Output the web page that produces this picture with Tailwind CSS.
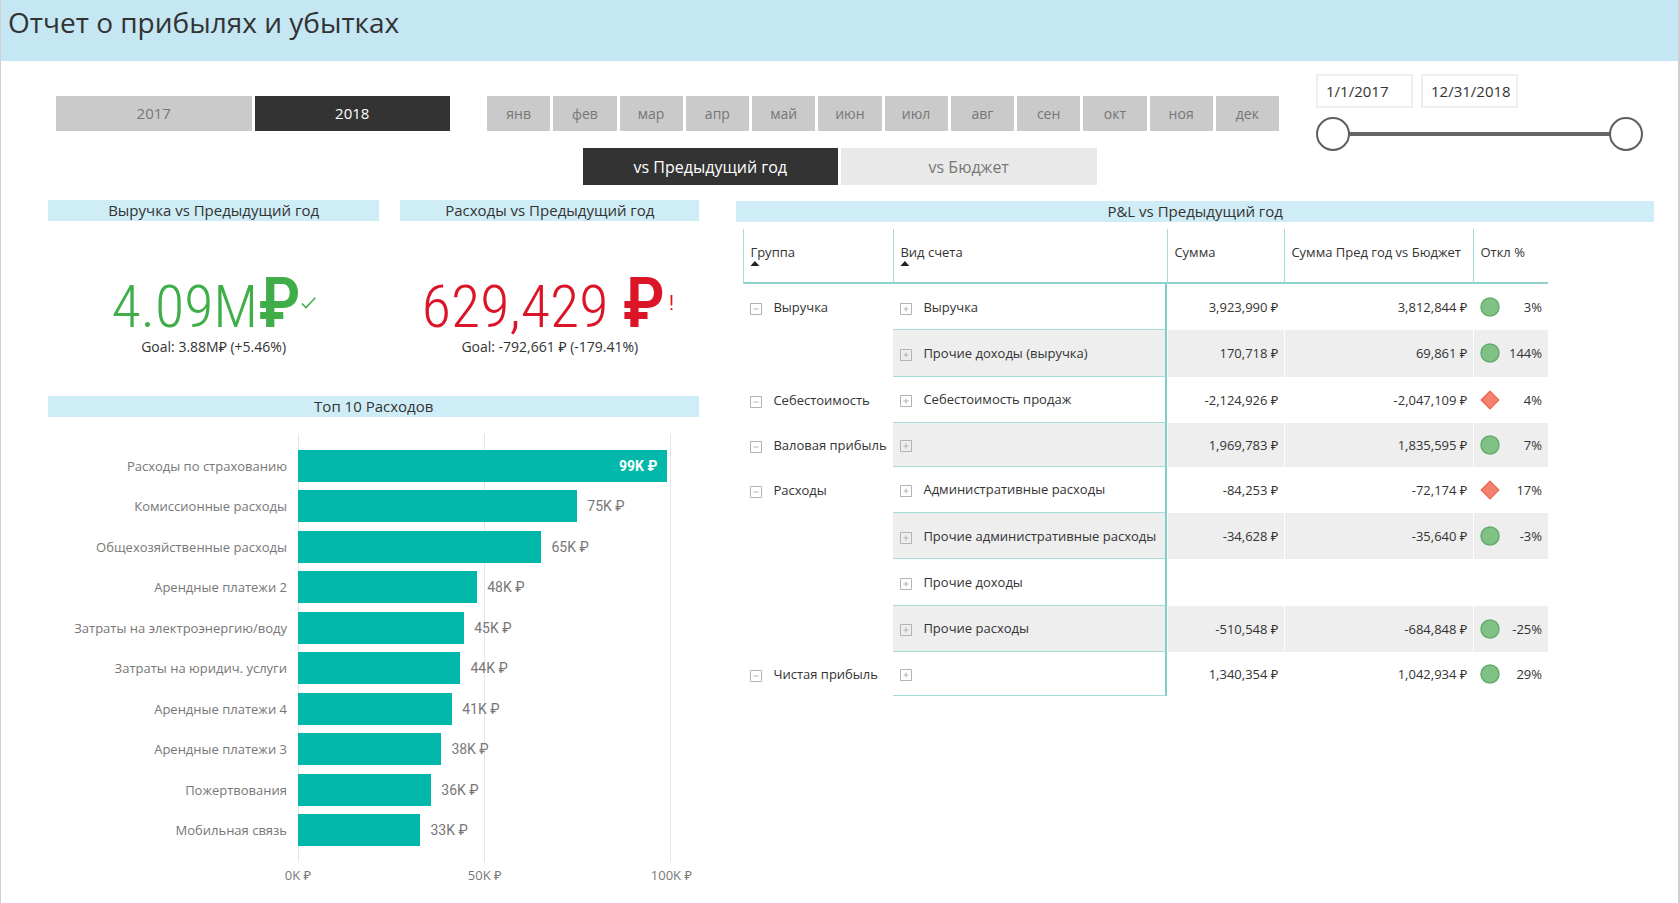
<!DOCTYPE html>
<html lang="ru">
<head>
<meta charset="utf-8">
<meta name="viewport" content="width=device-width, initial-scale=1">
<title>Отчет о прибылях и убытках</title>
<script src="https://cdn.jsdelivr.net/npm/@tailwindcss/browser@4"></script>
</head>
<body class="min-h-screen bg-white border-l border-r-2 border-[#cfcfcf] font-['Open_Sans','Noto_Sans',sans-serif] text-[#333]">
<svg class="hidden" aria-hidden="true">
  <symbol id="minus" viewBox="0 0 12 12"><path d="M.5.5h11v11H.5zM3.5 6h5" fill="none" stroke="#b5b0b3"/></symbol>
  <symbol id="plus" viewBox="0 0 12 12"><path d="M.5.5h11v11H.5zM3.5 6h5M6 3.5v5" fill="none" stroke="#b5b0b3"/></symbol>
  <symbol id="good" viewBox="0 0 20 20"><circle cx="10" cy="10" r="9" fill="#80c285" stroke="#66ad6d" stroke-width="1.5"/></symbol>
  <symbol id="bad" viewBox="0 0 20 20"><path d="M10 1.2 18.8 10 10 18.8 1.2 10z" fill="#f4806e" stroke="#e8674f" stroke-width="1.2"/></symbol>
</svg>

<header class="h-[61px] bg-[#c4e7f3] px-[7px]">
  <h1 class="text-[28px] leading-[44px]">Отчет о прибылях и убытках</h1>
</header>

<section aria-label="Фильтры" class="grid grid-cols-[394fr_792fr_327fr] gap-x-[37px] pl-[55px] pr-[35px] pt-[13px]">
  <div class="mt-[22px] grid h-[35px] grid-cols-2 gap-[3px] text-[15px]">
    <button class="bg-[#cacaca] text-[#777]">2017</button>
    <button class="bg-[#333] font-medium text-white">2018</button>
  </div>
  <div class="mt-[22px] grid h-[35px] grid-cols-12 gap-[3px] text-sm text-[#777]">
    <button class="bg-[#cacaca]">янв</button>
    <button class="bg-[#cacaca]">фев</button>
    <button class="bg-[#cacaca]">мар</button>
    <button class="bg-[#cacaca]">апр</button>
    <button class="bg-[#cacaca]">май</button>
    <button class="bg-[#cacaca]">июн</button>
    <button class="bg-[#cacaca]">июл</button>
    <button class="bg-[#cacaca]">авг</button>
    <button class="bg-[#cacaca]">сен</button>
    <button class="bg-[#cacaca]">окт</button>
    <button class="bg-[#cacaca]">ноя</button>
    <button class="bg-[#cacaca]">дек</button>
  </div>
  <div>
    <div class="flex gap-2 text-[15px]">
      <input type="text" aria-label="Начало периода" value="1/1/2017" class="h-[34px] w-[97px] border-2 border-[#efefef] pl-2">
      <input type="text" aria-label="Конец периода" value="12/31/2018" class="h-[34px] w-[97px] border-2 border-[#efefef] pl-2">
    </div>
    <div class="mt-[9px] grid h-[34px] items-center">
      <div class="col-start-1 row-start-1 mx-4 h-1 bg-[#666]"></div>
      <input type="range" aria-label="Начальная дата" min="0" max="100" value="0" class="pointer-events-none col-start-1 row-start-1 h-[34px] appearance-none bg-transparent [&::-webkit-slider-thumb]:pointer-events-auto [&::-webkit-slider-thumb]:size-[34px] [&::-webkit-slider-thumb]:appearance-none [&::-webkit-slider-thumb]:rounded-full [&::-webkit-slider-thumb]:border-2 [&::-webkit-slider-thumb]:border-[#605e5c] [&::-webkit-slider-thumb]:bg-white">
      <input type="range" aria-label="Конечная дата" min="0" max="100" value="100" class="pointer-events-none col-start-1 row-start-1 h-[34px] appearance-none bg-transparent [&::-webkit-slider-thumb]:pointer-events-auto [&::-webkit-slider-thumb]:size-[34px] [&::-webkit-slider-thumb]:appearance-none [&::-webkit-slider-thumb]:rounded-full [&::-webkit-slider-thumb]:border-2 [&::-webkit-slider-thumb]:border-[#605e5c] [&::-webkit-slider-thumb]:bg-white">
    </div>
  </div>
</section>

<div class="mx-auto -mt-[3px] grid h-[37px] w-[514px] grid-cols-2 gap-[3px] text-base">
  <button class="bg-[#333] font-medium text-white">vs Предыдущий год</button>
  <button class="bg-[#e9e9e9] text-[#777]">vs Бюджет</button>
</div>

<main class="mt-[15px] grid grid-cols-[651fr_917fr] gap-[37px] pl-[47px] pr-6">
  <div>
    <div class="grid grid-cols-[331fr_299fr] gap-[21px]">
      <section class="h-[196px] text-center">
        <h2 class="h-[21px] bg-[#cfedf6] text-[15px] leading-[21px]">Выручка vs Предыдущий год</h2>
        <p class="mt-[52px] flex h-[60px] items-baseline justify-center font-['Roboto_Condensed','Liberation_Sans_Narrow','Roboto',sans-serif] leading-[60px] text-[#3fae49]">
          <span class="text-[60px] font-light">4.09M</span>
          <span class="text-[70px] font-medium">₽</span>
          <svg class="h-3 w-[15px] self-center" viewBox="0 0 15 12" fill="none" stroke="currentColor" stroke-width="1.5" role="img" aria-label="Цель достигнута"><path d="M.8 6.5 5 10.6 14.3.8"/></svg>
        </p>
        <p class="mt-1 text-sm leading-5">Goal: 3.88M₽ (+5.46%)</p>
      </section>
      <section class="h-[196px] text-center">
        <h2 class="h-[21px] bg-[#cfedf6] text-[15px] leading-[21px]">Расходы vs Предыдущий год</h2>
        <p class="mt-[52px] flex h-[60px] items-baseline justify-center pr-1 font-['Roboto_Condensed','Liberation_Sans_Narrow','Roboto',sans-serif] leading-[60px] text-[#dc1427]">
          <span class="text-[60px] font-light">629,429</span>
          <span class="ml-3.5 text-[70px] font-medium">₽</span>
          <span class="ml-1 self-center text-xl">!</span>
        </p>
        <p class="mt-1 text-sm leading-5">Goal: -792,661 ₽ (-179.41%)</p>
      </section>
    </div>

    <section>
      <h2 class="h-[21px] bg-[#cfedf6] text-center text-[15px] leading-[21px]">Топ 10 Расходов</h2>
      <div class="mt-[17px] grid grid-cols-[239px_1fr] gap-x-[11px] pr-7 text-[13px] text-[#777]">
        <ul class="flex h-[428px] flex-col justify-between pt-4 pb-4 text-right leading-8">
          <li>Расходы по страхованию</li>
          <li>Комиссионные расходы</li>
          <li>Общехозяйственные расходы</li>
          <li>Арендные платежи 2</li>
          <li>Затраты на электроэнергию/воду</li>
          <li>Затраты на юридич. услуги</li>
          <li>Арендные платежи 4</li>
          <li>Арендные платежи 3</li>
          <li>Пожертвования</li>
          <li>Мобильная связь</li>
        </ul>
        <div class="grid">
          <div class="col-start-1 row-start-1 grid grid-cols-2 border-x border-[#e6e6e6]"><div class="border-r border-[#e6e6e6]"></div></div>
          <ul class="z-10 col-start-1 row-start-1 flex h-[428px] flex-col justify-between pt-4 pb-4 text-sm leading-8 font-['Roboto','Noto_Sans',sans-serif] [&>li]:flex [&>li]:h-8 [&>li]:gap-2.5 [&>li]:whitespace-nowrap">
            <li><div class="bg-[#01b8aa] pr-2.5 text-right font-bold text-white" style="width:98.9%">99K ₽</div></li>
            <li><div class="bg-[#01b8aa]" style="width:74.8%"></div>75K ₽</li>
            <li><div class="bg-[#01b8aa]" style="width:65.2%"></div>65K ₽</li>
            <li><div class="bg-[#01b8aa]" style="width:48%"></div>48K ₽</li>
            <li><div class="bg-[#01b8aa]" style="width:44.5%"></div>45K ₽</li>
            <li><div class="bg-[#01b8aa]" style="width:43.5%"></div>44K ₽</li>
            <li><div class="bg-[#01b8aa]" style="width:41.3%"></div>41K ₽</li>
            <li><div class="bg-[#01b8aa]" style="width:38.4%"></div>38K ₽</li>
            <li><div class="bg-[#01b8aa]" style="width:35.7%"></div>36K ₽</li>
            <li><div class="bg-[#01b8aa]" style="width:32.8%"></div>33K ₽</li>
          </ul>
        </div>
        <div class="col-start-2 -mx-7 flex justify-between leading-[26px]">
          <span class="w-14 text-center">0K ₽</span><span class="w-14 text-center">50K ₽</span><span class="w-14 text-center">100K ₽</span>
        </div>
      </div>
    </section>
  </div>

  <section class="mt-px">
    <h2 class="h-[21px] bg-[#cfedf6] text-center text-[15px] leading-[21px]">P&amp;L vs Предыдущий год</h2>
    <div class="mt-[7px] pl-[7px] pr-[106px]">
      <table class="h-[467px] w-full table-fixed border-separate border-spacing-0 text-[13px] leading-5 [&_td]:whitespace-nowrap [&_td]:p-0 [&_td]:pr-1.5 [&_th]:border-b-2 [&_th]:border-l [&_th]:border-b-[#8dd0cc] [&_th]:border-l-[#a0deda] [&_th]:p-0 [&_th]:pl-1.5 [&_th]:text-left [&_th]:align-top [&_th]:font-normal [&_th]:whitespace-nowrap [&_td:nth-child(n+3)]:border-l [&_td:nth-child(n+3)]:border-white [&_td:nth-child(n+3)]:text-right [&_td:nth-child(2)]:border-r-2 [&_td:nth-child(2)]:border-b [&_td:nth-child(2)]:border-r-[#7fccc7] [&_td:nth-child(2)]:border-b-[#a5dcd8] [&_td:nth-child(-n+2)]:pl-[7px] [&_tbody_tr:nth-child(even)_td:nth-child(n+2)]:bg-[#eee] [&_td>div]:flex [&_td>div]:items-center [&_td>div]:gap-[11px] [&_button]:mt-1 [&_button]:size-3 [&_button]:shrink-0 [&_td:last-child>div]:justify-between [&_td:last-child>div]:gap-0 [&_td_svg]:size-full [&_td_svg]:shrink-0 [&_td:last-child_svg]:size-5 [&_td:last-child]:pl-1.5">
        <colgroup><col class="w-[150px]"><col class="w-[274px]"><col class="w-[117px]"><col class="w-[189px]"><col></colgroup>
        <thead>
          <tr class="h-[55px]">
            <th scope="col"><span class="mt-[13px] block h-[19px]">Группа</span><span class="block h-[5px] w-[9px] bg-[#222] [clip-path:polygon(50%_0,100%_100%,0_100%)]"></span></th>
            <th scope="col"><span class="mt-[13px] block h-[19px]">Вид счета</span><span class="block h-[5px] w-[9px] bg-[#222] [clip-path:polygon(50%_0,100%_100%,0_100%)]"></span></th>
            <th scope="col"><span class="mt-[13px] block">Сумма</span></th>
            <th scope="col"><span class="mt-[13px] block">Сумма Пред год vs Бюджет</span></th>
            <th scope="col"><span class="mt-[13px] block">Откл %</span></th>
          </tr>
        </thead>
        <tbody>
          <tr><td><div><button aria-label="Свернуть"><svg><use href="#minus"/></svg></button>Выручка</div></td><td><div><button aria-label="Развернуть"><svg><use href="#plus"/></svg></button>Выручка</div></td><td>3,923,990 ₽</td><td>3,812,844 ₽</td><td><div><svg><use href="#good"/></svg>3%</div></td></tr>
          <tr><td></td><td><div><button aria-label="Развернуть"><svg><use href="#plus"/></svg></button>Прочие доходы (выручка)</div></td><td>170,718 ₽</td><td>69,861 ₽</td><td><div><svg><use href="#good"/></svg>144%</div></td></tr>
          <tr><td><div><button aria-label="Свернуть"><svg><use href="#minus"/></svg></button>Себестоимость</div></td><td><div><button aria-label="Развернуть"><svg><use href="#plus"/></svg></button>Себестоимость продаж</div></td><td>-2,124,926 ₽</td><td>-2,047,109 ₽</td><td><div><svg><use href="#bad"/></svg>4%</div></td></tr>
          <tr><td><div><button aria-label="Свернуть"><svg><use href="#minus"/></svg></button>Валовая прибыль</div></td><td><div><button aria-label="Развернуть"><svg><use href="#plus"/></svg></button></div></td><td>1,969,783 ₽</td><td>1,835,595 ₽</td><td><div><svg><use href="#good"/></svg>7%</div></td></tr>
          <tr><td><div><button aria-label="Свернуть"><svg><use href="#minus"/></svg></button>Расходы</div></td><td><div><button aria-label="Развернуть"><svg><use href="#plus"/></svg></button>Административные расходы</div></td><td>-84,253 ₽</td><td>-72,174 ₽</td><td><div><svg><use href="#bad"/></svg>17%</div></td></tr>
          <tr><td></td><td><div><button aria-label="Развернуть"><svg><use href="#plus"/></svg></button>Прочие административные расходы</div></td><td>-34,628 ₽</td><td>-35,640 ₽</td><td><div><svg><use href="#good"/></svg>-3%</div></td></tr>
          <tr><td></td><td><div><button aria-label="Развернуть"><svg><use href="#plus"/></svg></button>Прочие доходы</div></td><td></td><td></td><td></td></tr>
          <tr><td></td><td><div><button aria-label="Развернуть"><svg><use href="#plus"/></svg></button>Прочие расходы</div></td><td>-510,548 ₽</td><td>-684,848 ₽</td><td><div><svg><use href="#good"/></svg>-25%</div></td></tr>
          <tr><td><div><button aria-label="Свернуть"><svg><use href="#minus"/></svg></button>Чистая прибыль</div></td><td><div><button aria-label="Развернуть"><svg><use href="#plus"/></svg></button></div></td><td>1,340,354 ₽</td><td>1,042,934 ₽</td><td><div><svg><use href="#good"/></svg>29%</div></td></tr>
        </tbody>
      </table>
    </div>
  </section>
</main>
</body>
</html>
